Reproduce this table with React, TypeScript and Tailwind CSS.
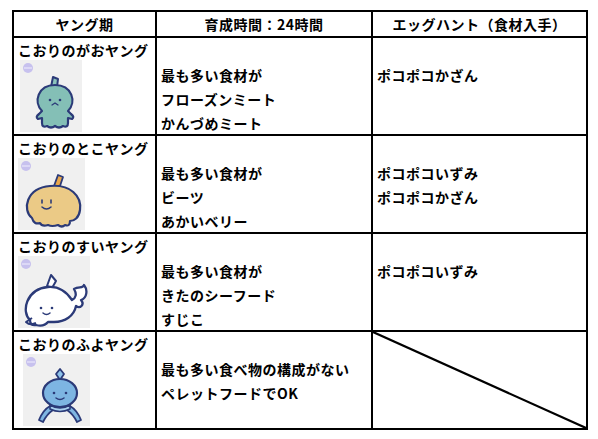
import type { ReactNode } from 'react';

const NAVY = '#2b3a78';

function Badge() {
  return (
    <g>
      <circle cx="8" cy="8" r="5" fill="#c7c1ee" />
      <rect x="4" y="7.3" width="8" height="1.4" fill="#e6e2fa" />
    </g>
  );
}

function Avatar({ w, ml, children }: { w: number; ml: number; children: ReactNode }) {
  return (
    <div className="bg-[#f0f0f0] h-[72px]" style={{ width: w, marginLeft: ml }}>
      <svg className="block" width={w} height={72} viewBox={`0 0 ${w} 72`}>
        <Badge />
        {children}
      </svg>
    </div>
  );
}

function Gao() {
  return (
    <Avatar w={62} ml={2}>
      <path d="M31 27 L33 17 L38 19 L37 27 Z" fill="#8cc4bb" stroke={NAVY} strokeWidth="2" strokeLinejoin="round" />
      <path
        d="M22 51 C13 42 18 25 35 25 C52 25 57 42 48 51 L51 54 Q55 57 52 59 L48 58 L48 63 Q48 68 43 66 Q39 69 35 66 Q31 69 27 66 Q22 68 22 63 L22 58 L18 59 Q15 57 19 54 Z"
        fill="#84bfb6"
        stroke={NAVY}
        strokeWidth="2.2"
        strokeLinejoin="round"
      />
      <circle cx="30" cy="40" r="1.3" fill={NAVY} />
      <circle cx="40" cy="40" r="1.3" fill={NAVY} />
      <path d="M32 45 L35 43 L38 45" fill="none" stroke={NAVY} strokeWidth="1.3" strokeLinecap="round" />
    </Avatar>
  );
}

function Toko() {
  return (
    <Avatar w={67} ml={0}>
      <path d="M36 28 L40 17 L45 19 L42 28 Z" fill="#e9a74a" stroke={NAVY} strokeWidth="1.8" strokeLinejoin="round" />
      <path
        d="M14 60 C4 52 8 30 32 28 C52 26 64 38 62 52 C61 60 56 63 52 63 Q52 69 47 67 Q44 70 40 67 Q34 69 30 67 Q24 69 22 65 Q16 67 14 60 Z"
        fill="#ebca86"
        stroke={NAVY}
        strokeWidth="2.2"
        strokeLinejoin="round"
      />
      <path d="M24 42 L24 45" stroke={NAVY} strokeWidth="1.6" strokeLinecap="round" />
      <path d="M33 42 L33 45" stroke={NAVY} strokeWidth="1.6" strokeLinecap="round" />
      <path d="M24 49 Q28.5 53 33 49" fill="none" stroke={NAVY} strokeWidth="1.5" strokeLinecap="round" />
    </Avatar>
  );
}

function Sui() {
  return (
    <Avatar w={72} ml={0}>
      <path d="M29 30 L33 19 L38 25 L34 32 Z" fill="#ffffff" stroke={NAVY} strokeWidth="2" strokeLinejoin="round" />
      <path
        d="M12 64 C3 56 8 33 30 31 C42 30 50 38 54 44 C58 42 59 38 56 33 C61 30 65 33 66 29 C70 34 69 42 63 44 C67 49 62 53 58 50 C56 60 47 66 36 66 L30 66 Q26 71 18 69 Q12 70 12 64 Z"
        fill="#ffffff"
        stroke={NAVY}
        strokeWidth="2.3"
        strokeLinejoin="round"
      />
      <path d="M14 62 L8 66 Q12 70 18 67" fill="none" stroke={NAVY} strokeWidth="2" strokeLinejoin="round" />
      <circle cx="23" cy="52" r="1.3" fill={NAVY} />
      <circle cx="34" cy="52" r="1.3" fill={NAVY} />
      <path d="M25 57 Q28.5 60 32 57" fill="none" stroke={NAVY} strokeWidth="1.5" strokeLinecap="round" />
    </Avatar>
  );
}

function Fuyo() {
  return (
    <Avatar w={67} ml={5}>
      <path d="M37 15 L41 20 L37 26 L33 20 Z" fill="#8ec2ea" stroke={NAVY} strokeWidth="1.8" strokeLinejoin="round" />
      <path d="M27 52 Q20 56 16 66 L20 68 Q24 60 30 56" fill="#7fb6e2" stroke={NAVY} strokeWidth="1.8" strokeLinejoin="round" />
      <path d="M47 52 Q54 56 58 66 L54 68 Q50 60 44 56" fill="#7fb6e2" stroke={NAVY} strokeWidth="1.8" strokeLinejoin="round" />
      <ellipse cx="37" cy="39" rx="17" ry="14" fill="#7db5e2" stroke={NAVY} strokeWidth="2.2" />
      <path d="M27 51 Q37 57 47 51 L47 55 Q37 60 27 55 Z" fill="#a9d0ee" stroke={NAVY} strokeWidth="1.6" strokeLinejoin="round" />
      <circle cx="31" cy="39" r="1.3" fill={NAVY} />
      <circle cx="43" cy="39" r="1.3" fill={NAVY} />
      <path d="M33 44 Q37 47 41 44" fill="none" stroke={NAVY} strokeWidth="1.5" strokeLinecap="round" />
    </Avatar>
  );
}

const rows = [
  {
    name: 'こおりのがおヤング',
    icon: <Gao />,
    food: ['最も多い食材が', 'フローズンミート', 'かんづめミート'],
    hunt: ['ポコポコかざん'],
  },
  {
    name: 'こおりのとこヤング',
    icon: <Toko />,
    food: ['最も多い食材が', 'ビーツ', 'あかいベリー'],
    hunt: ['ポコポコいずみ', 'ポコポコかざん'],
  },
  {
    name: 'こおりのすいヤング',
    icon: <Sui />,
    food: ['最も多い食材が', 'きたのシーフード', 'すじこ'],
    hunt: ['ポコポコいずみ'],
  },
  {
    name: 'こおりのふよヤング',
    icon: <Fuyo />,
    food: ['最も多い食べ物の構成がない', 'ペレットフードでOK'],
    hunt: null,
  },
];

function Lines({ items }: { items: string[] }) {
  return (
    <>
      {items.map((t) => (
        <div key={t} className="h-[24px] leading-[24px] whitespace-nowrap">
          {t}
        </div>
      ))}
    </>
  );
}

export default function App() {
  return (
    <div className="w-[598px] h-[439px] overflow-hidden bg-white pt-[10px] pl-[12px] font-['Noto_Sans_CJK_JP','Noto_Sans_CJK_SC',sans-serif] text-[14px] font-bold text-black tracking-[0.5px]">
      <div className="w-[576px] grid grid-cols-[143px_216px_213px] grid-rows-[26px_98px_98px_98px_96px] border-2 border-black">
        {/* header */}
        <div className="flex items-center justify-center border-r-2 border-b-2 border-black leading-[20px]">ヤング期</div>
        <div className="flex items-center justify-center border-r-2 border-b-2 border-black leading-[20px]">育成時間：24時間</div>
        <div className="flex items-center justify-center border-b-2 border-black leading-[20px]">エッグハント（食材入手）</div>

        {rows.map((r, i) => {
          const last = i === rows.length - 1;
          return (
            <div key={r.name} className="contents">
              <div className={`pl-[4px] border-r-2 border-black ${last ? '' : 'border-b-2'}`}>
                <div className="h-[22px] leading-[24px] whitespace-nowrap">{r.name}</div>
                {r.icon}
              </div>
              <div className={`pl-[4px] pt-[25px] border-r-2 border-black ${last ? '' : 'border-b-2'}`}>
                <Lines items={r.food} />
              </div>
              {r.hunt ? (
                <div className={`pl-[4px] pt-[25px] border-black ${last ? '' : 'border-b-2'}`}>
                  <Lines items={r.hunt} />
                </div>
              ) : (
                <div className="relative">
                  <svg className="absolute inset-0 w-full h-full" preserveAspectRatio="none" viewBox="0 0 100 100">
                    <line x1="0" y1="0" x2="100" y2="100" stroke="black" strokeWidth="2.2" vectorEffect="non-scaling-stroke" />
                  </svg>
                </div>
              )}
            </div>
          );
        })}
      </div>
    </div>
  );
}
